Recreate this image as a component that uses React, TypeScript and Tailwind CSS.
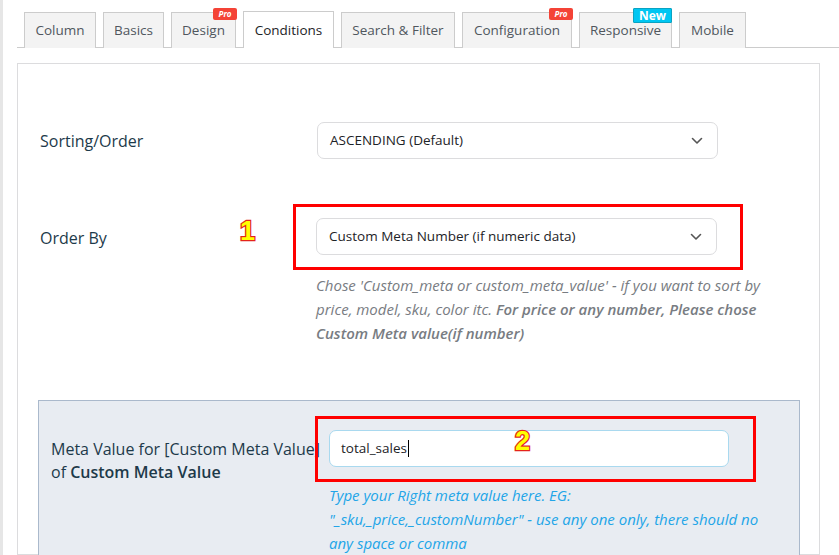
import React from "react";

const FONT = { fontFamily: '"Open Sans", "Noto Sans", sans-serif' };

type Tab = { label: string; w: string; active?: boolean; badge?: "pro" | "new" };

const TABS: Tab[] = [
  { label: "Column", w: "w-[72px]" },
  { label: "Basics", w: "w-[61px]" },
  { label: "Design", w: "w-[65px]", badge: "pro" },
  { label: "Conditions", w: "w-[91px]", active: true },
  { label: "Search & Filter", w: "w-[114px]" },
  { label: "Configuration", w: "w-[110px]", badge: "pro" },
  { label: "Responsive", w: "w-[93px]", badge: "new" },
  { label: "Mobile", w: "w-[67px]" },
];

const Chevron = () => (
  <svg width="12" height="8" viewBox="0 0 12 8" fill="none" className="shrink-0">
    <path d="M1.5 1.5 L6 6 L10.5 1.5" stroke="#555" strokeWidth="1.6" strokeLinecap="round" strokeLinejoin="round" />
  </svg>
);

const Select: React.FC<{ value: string }> = ({ value }) => (
  <div className="flex h-[37px] w-[401px] items-center justify-between rounded-[7px] border border-[#dcdcde] bg-white pl-[12px] pr-[14px] text-[13.5px] text-[#1d2327]">
    <span>{value}</span>
    <Chevron />
  </div>
);

const Marker: React.FC<{ n: string; className: string }> = ({ n, className }) => (
  <span
    className={`absolute text-[27px] font-extrabold leading-none text-[#ffff00] [-webkit-text-stroke:2.5px_#e4231b] [paint-order:stroke_fill] ${className}`}
    style={{ fontFamily: '"Liberation Sans", Arial, sans-serif' }}
  >
    {n}
  </span>
);

export default function App() {
  return (
    <div className="flex h-[555px] w-full overflow-hidden bg-white" style={FONT}>
      <div className="w-[3px] shrink-0 bg-[#e6e6e6]" />
      <div className="flex min-w-0 flex-1 flex-col pl-[14px]">
        {/* tab bar */}
        <div className="flex h-[48px] shrink-0 items-end gap-[7px] border-b border-[#cccccc] pl-[7px]">
          {TABS.map((t) => (
            <div
              key={t.label}
              className={`relative -mb-px flex ${t.w} items-center justify-center border border-b-0 border-[#cccccc] text-[13.5px] ${
                t.active ? "h-[37px] bg-white text-[#1d2327]" : "h-[36px] bg-[#f3f3f3] text-[#50575e]"
              }`}
            >
              {t.label}
              {t.badge === "pro" && (
                <span className="absolute -top-[5px] right-[-2px] flex h-[12px] w-[24px] items-center justify-center rounded-[2px] bg-[#f44336] text-[8px] font-bold italic leading-none text-white">
                  Pro
                </span>
              )}
              {t.badge === "new" && (
                <span className="absolute -top-[5px] right-[-1px] flex h-[15px] w-[39px] items-center justify-center rounded-[1px] border border-[#0aa3c2] bg-[#00c6f2] text-[12px] font-bold leading-none text-white">
                  New
                </span>
              )}
            </div>
          ))}
        </div>

        {/* settings panel */}
        <div className="mt-[15px] min-h-0 w-[803px] flex-1 border border-[#dcdcde] pl-[22px] pt-[58px]">
          <div className="flex items-center">
            <div className="w-[277px] text-[16px] text-[#1d3a4a]">Sorting/Order</div>
            <Select value="ASCENDING (Default)" />
          </div>

          <div className="relative mt-[59px] flex items-start">
            <div className="w-[276px] pt-[8px] text-[16px] text-[#1d3a4a]">Order By</div>
            <Marker n="1" className="left-[200px] top-0" />
            <div className="flex flex-col">
              <div className="relative w-[401px]">
                <div className="pointer-events-none absolute -bottom-[15px] -left-[23px] -right-[26px] -top-[14px] border-[3px] border-[#ff0000]" />
                <Select value="Custom Meta Number (if numeric data)" />
              </div>
              <p className="mt-[18px] w-[448px] text-[15px] italic leading-[24px] text-[#787c82]">
                Chose 'Custom_meta or custom_meta_value' - if you want to sort by price, model, sku, color itc.{" "}
                <b className="font-semibold">For price or any number, Please chose Custom Meta value(if number)</b>
              </p>
            </div>
          </div>

          <div className="-ml-[2px] mt-[55px] flex h-[200px] w-[762px] items-start border border-[#aab9cc] bg-[#e8ecf2] pl-[12px] pt-[29px]">
            <div className="w-[278px] pt-[8px] text-[16px] leading-[23px] text-[#1d3a4a]">
              Meta Value for [Custom Meta Value] of <b className="font-semibold">Custom Meta Value</b>
            </div>
            <div className="flex flex-col">
              <div className="relative w-[400px]">
                <div className="pointer-events-none absolute -bottom-[15px] -left-[14px] -right-[27px] -top-[14px] border-[3px] border-[#ff0000]" />
                <div className="flex h-[37px] w-[400px] items-center rounded-[7px] border border-[#a9d9ef] bg-white pl-[11px] text-[13.5px] text-[#1d2327]">
                  total_sales
                  <span className="ml-px inline-block h-[17px] w-px bg-black" />
                </div>
                <Marker n="2" className="left-[186px] top-[-2px]" />
              </div>
              <p className="mt-[16px] w-[448px] text-[15px] italic leading-[24px] text-[#22a5e8]">
                Type your Right meta value here. EG:
                <br />
                "_sku,_price,_customNumber" - use any one only, there should no any space or comma
              </p>
            </div>
          </div>
        </div>
      </div>
    </div>
  );
}
